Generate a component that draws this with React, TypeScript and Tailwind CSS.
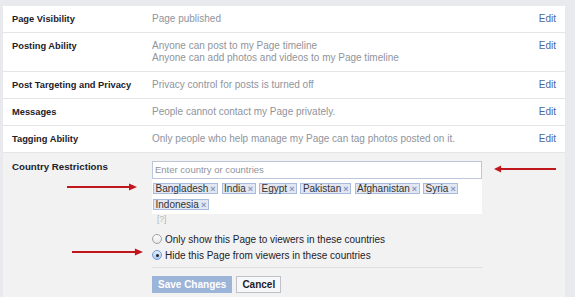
const rows = [
  { label: 'Page Visibility', lines: ['Page published'] },
  {
    label: 'Posting Ability',
    lines: ['Anyone can post to my Page timeline', 'Anyone can add photos and videos to my Page timeline'],
  },
  { label: 'Post Targeting and Privacy', lines: ['Privacy control for posts is turned off'] },
  { label: 'Messages', lines: ['People cannot contact my Page privately.'] },
  { label: 'Tagging Ability', lines: ['Only people who help manage my Page can tag photos posted on it.'] },
];

const countries = ['Bangladesh', 'India', 'Egypt', 'Pakistan', 'Afghanistan', 'Syria', 'Indonesia'];

function Arrow({ left = false }: { left?: boolean }) {
  return (
    <svg width="100%" height="8" viewBox="0 0 70 8" preserveAspectRatio="none" className="block">
      {left ? (
        <>
          <line x1="6" y1="4" x2="70" y2="4" stroke="#c0161c" strokeWidth="2" />
          <polygon points="0,4 8,0.5 8,7.5" fill="#c0161c" />
        </>
      ) : (
        <>
          <line x1="0" y1="4" x2="64" y2="4" stroke="#c0161c" strokeWidth="2" />
          <polygon points="70,4 62,0.5 62,7.5" fill="#c0161c" />
        </>
      )}
    </svg>
  );
}

function Radio({ checked }: { checked?: boolean }) {
  return checked ? (
    <span className="flex h-[10px] w-[10px] items-center justify-center rounded-full border border-[#6d9bd8] bg-gradient-to-b from-[#e4efff] to-[#a9c8f2]">
      <span className="h-[3px] w-[3px] rounded-full bg-[#1d2129]" />
    </span>
  ) : (
    <span className="h-[10px] w-[10px] rounded-full border border-[#a0a0a0] bg-gradient-to-b from-white to-[#e6e6e6]" />
  );
}

export default function App() {
  return (
    <div
      className="h-[297px] w-[575px] overflow-hidden bg-[#e9eaed] pl-[3px] pr-[10px] pt-[6px]"
      style={{ fontFamily: '"Liberation Sans", Arial, sans-serif' }}
    >
      <div className="bg-white">
        {rows.map((row) => (
          <div key={row.label} className="flex border-b border-[#e5e5e5] px-[9px] py-[7px] leading-[12px]">
            <div className="w-[140px] text-[9.3px] font-bold text-[#1d2129]">{row.label}</div>
            <div className="flex-1 text-[10px] text-[#90949c]">
              {row.lines.map((l) => (
                <div key={l}>{l}</div>
              ))}
            </div>
            <div className="text-[10px] text-[#4b67a1]">Edit</div>
          </div>
        ))}

        <section className="relative flex h-[200px] bg-[#f2f2f2] px-[9px] pt-[8px]">
          <div className="w-[140px] text-[9.7px] font-bold leading-[12px] text-[#1d2129]">Country Restrictions</div>
          <div className="w-[330px]">
            <div className="flex h-[18px] items-center border border-[#bdc7d8] bg-white px-[2px] text-[9.5px] text-[#90949c]">
              Enter country or countries
            </div>
            <div className="flex h-[35px] flex-wrap content-start gap-x-[3.5px] gap-y-[5px] bg-white pl-[1px] pt-[4px]">
              {countries.map((c) => (
                <span
                  key={c}
                  className="flex h-[11px] items-center border border-[#a9bbdc] bg-[#e2e7f2] px-[1.5px] text-[10px] leading-[10px] text-[#333]"
                >
                  {c}
                  <span className="ml-[2px] text-[9px] font-bold text-[#8497c2]">×</span>
                </span>
              ))}
            </div>
            <div className="mt-[1px] pl-[5px] text-[8.5px] leading-[8px] text-[#b5b5b5]">[?]</div>
            <div className="mt-[8px] text-[10px] text-[#1d2129]">
              <div className="flex h-[16px] items-center gap-[3px]">
                <Radio />
                <span>Only show this Page to viewers in these countries</span>
              </div>
              <div className="flex h-[16px] items-center gap-[3px]">
                <Radio checked />
                <span>Hide this Page from viewers in these countries</span>
              </div>
            </div>
            <div className="mt-[4px] border-t border-[#dddfe2]" />
            <div className="mt-[8px] flex gap-[4px]">
              <button className="h-[17px] border border-[#9cb4d8] bg-[#9cb4d8] px-[5px] text-[10px] font-bold text-white">
                Save Changes
              </button>
              <button className="h-[17px] border border-[#bfc2c7] bg-[#f6f7f9] px-[5px] text-[10px] font-bold text-[#1d2129]">
                Cancel
              </button>
            </div>
          </div>

          <div className="absolute left-[64px] top-[30px] w-[70px]">
            <Arrow />
          </div>
          <div className="absolute left-[69px] top-[95px] w-[71px]">
            <Arrow />
          </div>
          <div className="absolute left-[491px] top-[12px] w-[62px]">
            <Arrow left />
          </div>
        </section>
      </div>
    </div>
  );
}
